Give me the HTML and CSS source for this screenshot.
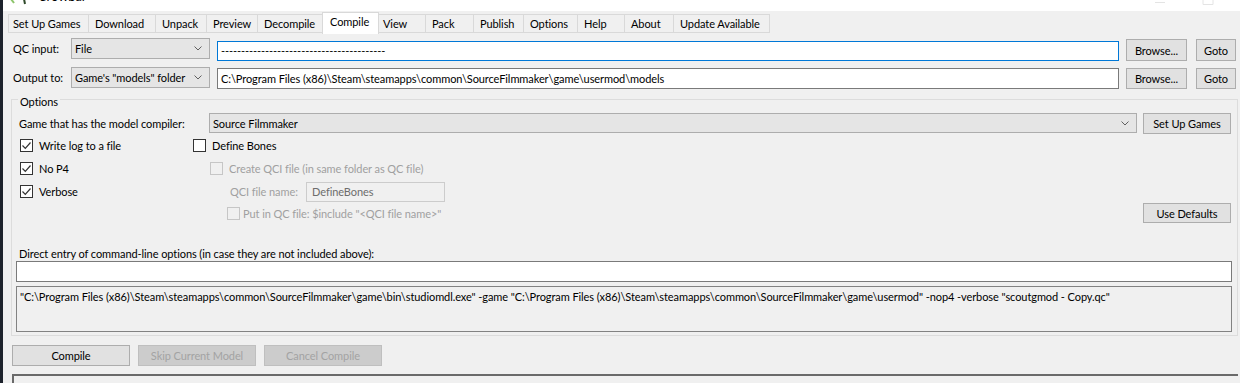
FILE: index.html
```html
<html>
 <head>
  <title>Crowbar - Compile</title>
  <meta name='viewport' content='width=device-width,initial-scale=1.0'>
  <link rel="stylesheet" href="styles.css">
 </head>
 <body>
  <div class='edge'></div>
  <div class='window'>
   <div class='titlebar'>
    <svg class='logo' width='20' height='6' viewBox='0 0 20 6'><path d='M1 0 L4 4' stroke='#8cc46a' stroke-width='2'/><path d='M14 0 L15 5' stroke='#2f4a2a' stroke-width='2'/></svg>
    <span class='apptitle'>Crowbar</span>
    <svg class='ctl' width='48' height='6' viewBox='0 0 48 6'><path d='M19 2.5 H29' stroke='#e4e4e4'/></svg>
    <svg class='ctl' width='48' height='6' viewBox='0 0 48 6'><path d='M19 0 V4.5 H29 V0' fill='none' stroke='#e4e4e4'/></svg>
   </div>
   <div class='tabs'>
    <span class='tab'>Set Up Games</span>
    <span class='tab'>Download</span>
    <span class='tab'>Unpack</span>
    <span class='tab'>Preview</span>
    <span class='tab'>Decompile</span>
    <span class='tab active'>Compile</span>
    <span class='tab'>View</span>
    <span class='tab'>Pack</span>
    <span class='tab'>Publish</span>
    <span class='tab'>Options</span>
    <span class='tab'>Help</span>
    <span class='tab'>About</span>
    <span class='tab'>Update Available</span>
   </div>
   <div class='page'>
    <div class='row r1'>
     <span class='lbl'>QC input:</span>
     <div class='combo'><span>File</span><svg width='8' height='5' viewBox='0 0 8 5'><path d='M0.5 0.5 L4 4 L7.5 0.5' fill='none' stroke='#606060'/></svg></div>
     <div class='field focus'>-----------------------------------------</div>
     <button class='btn browse'>Browse...</button>
     <button class='btn goto'>Goto</button>
    </div>
    <div class='row r2'>
     <span class='lbl'>Output to:</span>
     <div class='combo'><span>Game's "models" folder</span><svg width='8' height='5' viewBox='0 0 8 5'><path d='M0.5 0.5 L4 4 L7.5 0.5' fill='none' stroke='#606060'/></svg></div>
     <div class='field'>C:\Program Files (x86)\Steam\steamapps\common\SourceFilmmaker\game\usermod\models</div>
     <button class='btn browse'>Browse...</button>
     <button class='btn goto'>Goto</button>
    </div>

    <div class='group'>
     <span class='legend'>Options</span>
     <div class='row game'>
      <span class='lbl'>Game that has the model compiler:</span>
      <div class='combo'><span>Source Filmmaker</span><svg width='8' height='5' viewBox='0 0 8 5'><path d='M0.5 0.5 L4 4 L7.5 0.5' fill='none' stroke='#606060'/></svg></div>
      <button class='btn setup'>Set Up Games</button>
     </div>
     <div class='opts'>
      <div class='col left'>
       <div class='check on'><i></i>Write log to a file</div>
       <div class='check on'><i></i>No P4</div>
       <div class='check on'><i></i>Verbose</div>
      </div>
      <div class='col mid'>
       <div class='check'><i></i>Define Bones</div>
       <div class='check off qci'><i></i>Create QCI file (in same folder as QC file)</div>
       <div class='qciname'><span>QCI file name:</span><div class='field off'>DefineBones</div></div>
       <div class='check off put'><i></i>Put in QC file: $include "&lt;QCI file name&gt;"</div>
      </div>
      <button class='btn defaults'>Use Defaults</button>
     </div>
     <div class='direct'>Direct entry of command-line options (in case they are not included above):</div>
     <div class='field wide'></div>
     <div class='cmd'>"C:\Program Files (x86)\Steam\steamapps\common\SourceFilmmaker\game\bin\studiomdl.exe" -game "C:\Program Files (x86)\Steam\steamapps\common\SourceFilmmaker\game\usermod" -nop4 -verbose "scoutgmod - Copy.qc"</div>
    </div>

    <div class='actions'>
     <button class='btn act'>Compile</button>
     <button class='btn act dis'>Skip Current Model</button>
     <button class='btn act dis'>Cancel Compile</button>
    </div>
    <div class='log'></div>
   </div>
  </div>
 </body>
</html>
```

FILE: styles.css
```css
* {box-sizing:border-box}
body {margin:0; display:flex; height:383px; overflow:hidden; background:#f0f0f0; color:#000; font:11px Lato, sans-serif; letter-spacing:-0.08px}
button {font:inherit; color:inherit; letter-spacing:inherit; padding:0; margin:0}

.edge {width:3px; flex:none; background:#1d222c}
.window {flex:1; min-width:0; display:flex; flex-direction:column}

.titlebar {height:11px; flex:none; background:#fff; display:flex; overflow:hidden; padding-left:7px}
.logo {margin-top:-1px}
.apptitle {margin:-12px 0 0 8px; font-size:13px; line-height:16px}
.ctl {margin-left:auto; flex:none}
.ctl + .ctl {margin-left:0; margin-right:8px}

.tabs {display:grid; grid-template-columns:80px 67px 51px 51px 65px 57px 46px 48px 50px 54px 47px 49px 97px; margin:1px 0 0 5px; height:21px; align-items:end}
.tab {height:19px; line-height:17px; padding-left:6px; background:#f0f0f0; border:1px solid #d9d9d9; border-right:none; white-space:nowrap}
.tab:last-child {border-right:1px solid #d9d9d9}
.tab:first-child {padding-left:4px}
.tab.active {height:22px; margin-bottom:-1px; background:#fff; border-bottom:none; border-right:1px solid #d9d9d9; line-height:18px; padding-left:7px}
.tab.active + .tab {border-left:none; padding-left:4px}

.page {flex:1; display:flex; flex-direction:column; padding:0 2px 0 8px}

.row {display:flex; align-items:flex-start; white-space:nowrap}
.r1 {margin-top:5px; height:23px}
.r2 {margin-top:6px; height:22px}
.lbl {margin-left:2px; width:58px; flex:none; line-height:21px}

.combo {display:flex; align-items:center; justify-content:space-between; width:139px; height:21px; flex:none; background:#e5e5e5; border:1px solid #adadad; padding:0 7px 0 3px; white-space:nowrap}
.field {height:20px; background:#fff; border:1px solid #7a7a7a; padding:0 3px; line-height:18px; white-space:nowrap; overflow:hidden}
.field.focus {border-color:#0078d7}
.row .field {width:902px; margin:3px 0 0 7px; flex:none}
.r2 .field {height:21px; margin-top:1px; line-height:19px}

.btn {height:22px; background:#e1e1e1; border:1px solid #adadad; text-align:center; flex:none; white-space:nowrap}
.browse {width:61px; margin:1px 0 0 7px}
.goto {width:40px; margin:1px 0 0 9px}
.r2 .btn {height:21px; margin-top:1px}

.group {margin-top:10px; border:1px solid #dcdcdc; padding:0 4px 3px 0; display:flex; flex-direction:column}
.legend {margin:-6px 0 0 6px; padding:0 2px; line-height:16px; background:#f0f0f0; align-self:flex-start}
.game {margin-top:3px; height:21px}
.game .lbl {margin-left:7px; width:190px; line-height:21px}
.game .combo {width:928px; height:20px}
.setup {width:88px; height:21px; margin-left:6px}

.opts {display:flex; height:90px}
.col {display:flex; flex-direction:column}
.left {margin-left:8px; width:173px}
.check {display:flex; align-items:center; height:23px; white-space:nowrap}
.check i {width:13px; height:13px; border:1px solid #333; background:#fff; margin-right:6px; flex:none; display:flex}
.check.on i {background:#fff url("data:image/svg+xml,%3Csvg xmlns='http://www.w3.org/2000/svg' width='11' height='11'%3E%3Cpath d='M1.5 5.5 L4.3 8.3 L9.5 2.5' fill='none' stroke='%23333' stroke-width='1.2'/%3E%3C/svg%3E") center no-repeat}
.check.off {color:#a0a0a0}
.check.off i {border-color:#c6c6c6; background:#f0f0f0}
.qci {margin-left:17px}
.qciname {display:flex; align-items:center; height:23px; margin-left:37px; color:#a0a0a0}
.qciname span {width:76px; flex:none}
.qciname .field {width:139px; height:20px; background:#f0f0f0; border-color:#cccccc; color:#6d6d6d; padding-left:5px}
.put {margin-left:34px; height:21px}
.put i {margin-right:3px}
.defaults {width:88px; height:20px; margin:auto 2px 1px auto; align-self:flex-end}

.direct {margin:23px 0 0 7px; line-height:14px}
.field.wide {margin:0 0 0 4px; height:21px; width:1216px}
.cmd {margin:4px 0 0 4px; width:1216px; height:46px; border:1px solid #828282; padding:2px 3px; line-height:15px; white-space:nowrap; overflow:hidden}

.actions {display:flex; gap:8px; margin:9px 0 0 1px}
.act {width:118px; height:21px}
.act.dis {background:#cccccc; border-color:#bfbfbf; color:#a3a3a3}

.log {margin:8px 0 0 1px; flex:1; border-top:2px solid #6a6a6a; border-left:2px solid #6a6a6a; background:#f0f0f0}
```
